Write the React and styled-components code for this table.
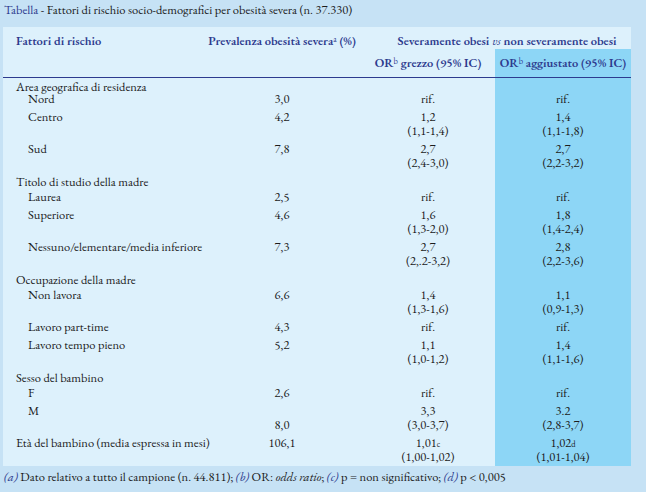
import React from "react";
import styled, { createGlobalStyle } from "styled-components";

const Global = createGlobalStyle`
  html, body { margin: 0; padding: 0; background: #c6e2f5; }
`;

const BLUE = "#2d3b8e";
const COLS = "200px 158px 134px 136px";

const Page = styled.div`
  width: 646px;
  height: 492px;
  background: #c6e2f5;
  font-family: "EB Garamond", "Liberation Serif", serif;
  font-size: 12.5px;
  color: #1c1c1c;
  overflow: hidden;
`;

const Caption = styled.div`
  padding: 3px 4px 0;
  line-height: 14px;
  height: 14px;
  white-space: nowrap;
`;

const CaptionTag = styled.span`
  color: ${BLUE};
`;

const Panel = styled.div`
  margin: 10px 0 0 3px;
  width: 628px;
  background: #ddf1fc;
`;

const Grid = styled.div`
  display: grid;
  grid-template-columns: ${COLS};
  line-height: 14px;
`;

const HeadRow = styled(Grid)`
  font-weight: 600;
  color: ${BLUE};
  white-space: nowrap;
`;

const HeadRowSub = styled(HeadRow)`
  border-bottom: 1px solid ${BLUE};
`;

const HeadCell = styled.div`
  padding: ${(p) => (p.$tall ? "7px 0" : "7px 0 1px")};
  padding-left: ${(p) => p.$pl || 0}px;
  text-align: ${(p) => (p.$left ? "left" : "center")};
  grid-column: ${(p) => p.$span || "auto"};
  background: ${(p) => (p.$hl ? "#8dd6f6" : "transparent")};
`;

const GroupRow = styled(Grid)`
  line-height: 12px;
  margin-bottom: ${(p) => (p.$first ? "-3px" : "0")};
`;

const GroupLabel = styled.div`
  grid-column: 1 / 4;
  padding: ${(p) => (p.$first ? "3px" : "4px")} 0 0 13px;
`;

const Cell = styled.div`
  padding: 2px 0;
  padding-left: ${(p) => p.$pl || 0}px;
  text-align: ${(p) => (p.$left ? "left" : "center")};
  white-space: nowrap;
  background: ${(p) => (p.$hl ? "#8dd6f6" : "transparent")};
`;

const Hl = styled.div`
  background: #8dd6f6;
`;

const Sup = styled.sup`
  font-size: 8.5px;
  line-height: 0;
  vertical-align: ${(p) => (p.$low ? "0px" : "3px")};
  font-weight: normal;
`;

const Em = styled.i`
  font-weight: normal;
`;

const Footnote = styled.div`
  padding: 4px 4px 0;
  line-height: 14px;
  white-space: nowrap;
`;

const NoteTag = styled.i`
  color: ${BLUE};
`;

const Lines = ({ v }) =>
  v.map((t, i) => <div key={i}>{t === "" ? "\u00a0" : t}</div>);

const groups = [
  {
    title: "Area geografica di residenza",
    rows: [
      { l: "Nord", p: ["3,0"], o: ["rif."], a: ["rif."] },
      { l: "Centro", p: ["4,2"], o: ["1,2", "(1,1-1,4)"], a: ["1,4", "(1,1-1,8)"] },
      { l: "Sud", p: ["7,8"], o: ["2,7", "(2,4-3,0)"], a: ["2,7", "(2,2-3,2)"] },
    ],
  },
  {
    title: "Titolo di studio della madre",
    rows: [
      { l: "Laurea", p: ["2,5"], o: ["rif."], a: ["rif."] },
      { l: "Superiore", p: ["4,6"], o: ["1,6", "(1,3-2,0)"], a: ["1,8", "(1,4-2,4)"] },
      {
        l: "Nessuno/elementare/media inferiore",
        p: ["7,3"],
        o: ["2,7", "(2,.2-3,2)"],
        a: ["2,8", "(2,2-3,6)"],
      },
    ],
  },
  {
    title: "Occupazione della madre",
    rows: [
      { l: "Non lavora", p: ["6,6"], o: ["1,4", "(1,3-1,6)"], a: ["1,1", "(0,9-1,3)"] },
      { l: "Lavoro part-time", p: ["4,3"], o: ["rif."], a: ["rif."] },
      { l: "Lavoro tempo pieno", p: ["5,2"], o: ["1,1", "(1,0-1,2)"], a: ["1,4", "(1,1-1,6)"] },
    ],
  },
  {
    title: "Sesso del bambino",
    rows: [
      { l: "F", p: ["2,6"], o: ["rif."], a: ["rif."] },
      { l: "M", p: ["", "8,0"], o: ["3,3", "(3,0-3,7)"], a: ["3.2", "(2,8-3,7)"] },
    ],
  },
];

export default function App() {
  return (
    <Page>
      <Global />
      <Caption>
        <CaptionTag>Tabella</CaptionTag> - Fattori di rischio socio-demografici per obesità
        severa (n. 37.330)
      </Caption>
      <Panel>
        <HeadRow>
          <HeadCell $left $pl={13}>Fattori di rischio</HeadCell>
          <HeadCell>
            Prevalenza obesità severa<Sup>a</Sup> (%)
          </HeadCell>
          <HeadCell $span="3 / 5" $pl={22}>
            Severamente obesi <Em>vs</Em> non severamente obesi
          </HeadCell>
        </HeadRow>
        <HeadRowSub>
          <HeadCell $tall />
          <HeadCell $tall />
          <HeadCell $tall>
            OR<Sup>b</Sup> grezzo (95% IC)
          </HeadCell>
          <HeadCell $tall $hl>
            OR<Sup>b</Sup> aggiustato (95% IC)
          </HeadCell>
        </HeadRowSub>
        {groups.map((g, gi) => (
          <React.Fragment key={g.title}>
            <GroupRow $first={gi === 0}>
              <GroupLabel $first={gi === 0}>{g.title}</GroupLabel>
              <Hl />
            </GroupRow>
            {g.rows.map((r) => (
              <Grid key={r.l}>
                <Cell $left $pl={25}>{r.l}</Cell>
                <Cell>
                  <Lines v={r.p} />
                </Cell>
                <Cell>
                  <Lines v={r.o} />
                </Cell>
                <Cell $hl>
                  <Lines v={r.a} />
                </Cell>
              </Grid>
            ))}
          </React.Fragment>
        ))}
        <Grid>
          <Cell $left $pl={13}>Età del bambino (media espressa in mesi)</Cell>
          <Cell>106,1</Cell>
          <Cell>
            <div>
              1,01<Sup $low>c</Sup>
            </div>
            <div>(1,00-1,02)</div>
          </Cell>
          <Cell $hl>
            <div>
              1,02<Sup $low>d</Sup>
            </div>
            <div>(1,01-1,04)</div>
          </Cell>
        </Grid>
      </Panel>
      <Footnote>
        <NoteTag>(a)</NoteTag> Dato relativo a tutto il campione (n. 44.811);{" "}
        <NoteTag>(b)</NoteTag> OR: <i>odds ratio</i>; <NoteTag>(c)</NoteTag> p = non
        significativo; <NoteTag>(d)</NoteTag> p &lt; 0,005
      </Footnote>
    </Page>
  );
}
